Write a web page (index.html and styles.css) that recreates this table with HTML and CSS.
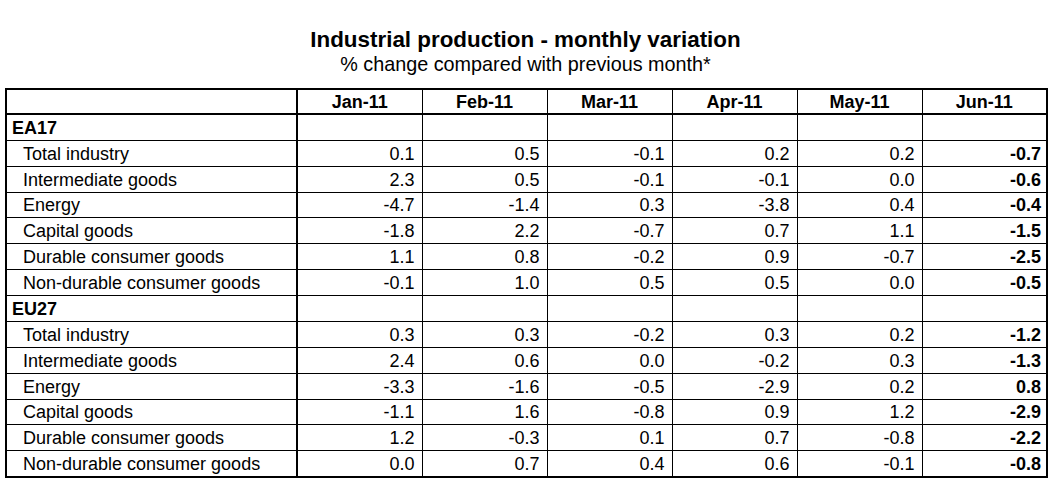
FILE: index.html
```html
<!DOCTYPE html>
<html>
<head>
<meta charset="utf-8">
<link rel="stylesheet" href="styles.css">
</head>
<body>
<div class="report">
  <h1 class="title">Industrial production - monthly variation</h1>
  <p class="subtitle">% change compared with previous month*</p>
  <table class="data">
    <colgroup>
      <col class="c-label">
      <col class="c-num"><col class="c-num"><col class="c-num"><col class="c-num"><col class="c-num"><col class="c-num">
    </colgroup>
    <thead>
      <tr><th class="lab"></th><th>Jan-11</th><th>Feb-11</th><th>Mar-11</th><th>Apr-11</th><th>May-11</th><th>Jun-11</th></tr>
    </thead>
    <tbody>
      <tr class="group"><td class="lab">EA17</td><td></td><td></td><td></td><td></td><td></td><td></td></tr>
      <tr><td class="lab">Total industry</td><td>0.1</td><td>0.5</td><td>-0.1</td><td>0.2</td><td>0.2</td><td class="last">-0.7</td></tr>
      <tr><td class="lab">Intermediate goods</td><td>2.3</td><td>0.5</td><td>-0.1</td><td>-0.1</td><td>0.0</td><td class="last">-0.6</td></tr>
      <tr class="short"><td class="lab">Energy</td><td>-4.7</td><td>-1.4</td><td>0.3</td><td>-3.8</td><td>0.4</td><td class="last">-0.4</td></tr>
      <tr><td class="lab">Capital goods</td><td>-1.8</td><td>2.2</td><td>-0.7</td><td>0.7</td><td>1.1</td><td class="last">-1.5</td></tr>
      <tr><td class="lab">Durable consumer goods</td><td>1.1</td><td>0.8</td><td>-0.2</td><td>0.9</td><td>-0.7</td><td class="last">-2.5</td></tr>
      <tr><td class="lab">Non-durable consumer goods</td><td>-0.1</td><td>1.0</td><td>0.5</td><td>0.5</td><td>0.0</td><td class="last">-0.5</td></tr>
      <tr class="group"><td class="lab">EU27</td><td></td><td></td><td></td><td></td><td></td><td></td></tr>
      <tr><td class="lab">Total industry</td><td>0.3</td><td>0.3</td><td>-0.2</td><td>0.3</td><td>0.2</td><td class="last">-1.2</td></tr>
      <tr><td class="lab">Intermediate goods</td><td>2.4</td><td>0.6</td><td>0.0</td><td>-0.2</td><td>0.3</td><td class="last">-1.3</td></tr>
      <tr><td class="lab">Energy</td><td>-3.3</td><td>-1.6</td><td>-0.5</td><td>-2.9</td><td>0.2</td><td class="last">0.8</td></tr>
      <tr class="short"><td class="lab">Capital goods</td><td>-1.1</td><td>1.6</td><td>-0.8</td><td>0.9</td><td>1.2</td><td class="last">-2.9</td></tr>
      <tr><td class="lab">Durable consumer goods</td><td>1.2</td><td>-0.3</td><td>0.1</td><td>0.7</td><td>-0.8</td><td class="last">-2.2</td></tr>
      <tr><td class="lab">Non-durable consumer goods</td><td>0.0</td><td>0.7</td><td>0.4</td><td>0.6</td><td>-0.1</td><td class="last">-0.8</td></tr>
    </tbody>
  </table>
</div>
</body>
</html>
```

FILE: styles.css
```css
html, body {
  margin: 0;
  padding: 0;
  background: #ffffff;
}

body {
  font-family: "Liberation Sans", Arial, sans-serif;
  color: #000000;
}

.report {
  width: 1041px;
  margin-left: 5px;
  padding-top: 29px;
}

.title {
  margin: 0;
  font-size: 22.4px;
  line-height: 22px;
  font-weight: bold;
  text-align: center;
}

.subtitle {
  margin: 3px 0 0 0;
  font-size: 19.8px;
  line-height: 20px;
  text-align: center;
}

.data {
  margin-top: 14px;
  width: 1041px;
  border-collapse: collapse;
  table-layout: fixed;
  border: 2px solid #000;
  font-size: 18px;
}

.c-label { width: 291px; }
.c-num { width: 125px; }

.data th,
.data td {
  border: 1px solid #000;
  height: 25px;
  padding: 0 7px 0 0;
  line-height: 20px;
  vertical-align: middle;
  text-align: right;
  white-space: nowrap;
}

.data tr.short td {
  height: 24px;
}

.data th {
  height: 23px;
  text-align: center;
  font-weight: bold;
  padding: 0;
  border-bottom: 2px solid #000;
}

.data .lab {
  text-align: left;
  padding-left: 16px;
  border-right: 2px solid #000;
}

.data .group .lab {
  font-weight: bold;
  padding-left: 5px;
}

.data .last {
  font-weight: bold;
  padding-right: 5px;
}
```
